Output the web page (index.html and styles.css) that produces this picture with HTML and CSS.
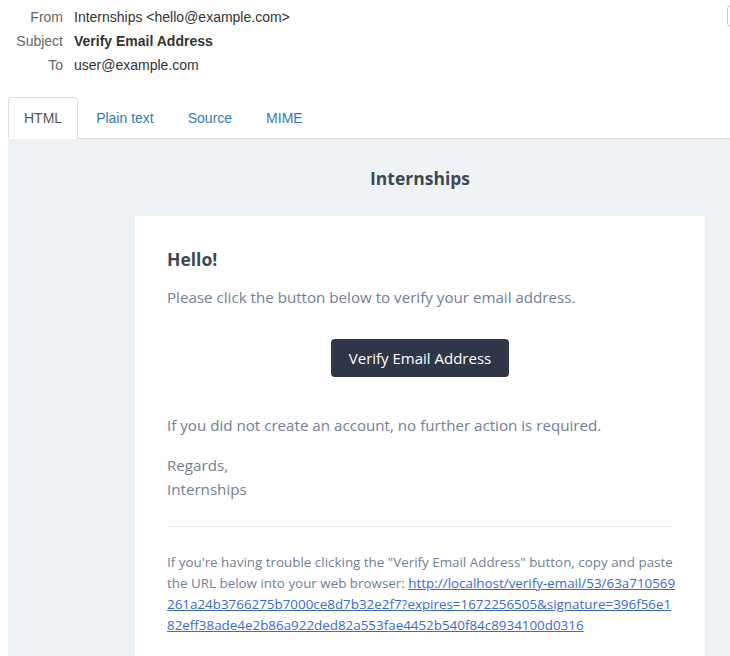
FILE: index.html
```html
<!DOCTYPE html>
<html>
<head>
<meta charset="utf-8">
<link rel="stylesheet" href="styles.css">
</head>
<body>
<div class="page">
  <div class="meta">
    <div class="fields">
      <div class="label">From</div><div class="value">Internships &lt;hello@example.com&gt;</div>
      <div class="label">Subject</div><div class="value strong">Verify Email Address</div>
      <div class="label">To</div><div class="value">user@example.com</div>
    </div>
    <div class="dl"></div>
  </div>
  <ul class="tabs">
    <li class="tab active">HTML</li>
    <li class="tab">Plain text</li>
    <li class="tab">Source</li>
    <li class="tab">MIME</li>
  </ul>
  <div class="mail">
    <div class="brand">Internships</div>
    <div class="card">
      <h1 class="hello">Hello!</h1>
      <p class="para">Please click the button below to verify your email address.</p>
      <div class="action"><span class="btn">Verify Email Address</span></div>
      <p class="para">If you did not create an account, no further action is required.</p>
      <p class="para">Regards,<br>Internships</p>
      <div class="subcopy">
        <p class="small">If you're having trouble clicking the "Verify Email Address" button, copy and paste<br>the URL below into your web browser: <a class="link" href="#">http://localhost/verify-email/53/63a710569<br>261a24b3766275b7000ce8d7b32e2f7?expires=1672256505&amp;signature=396f56e1<br>82eff38ade4e2b86a922ded82a553fae4452b540f84c8934100d0316</a></p>
      </div>
    </div>
  </div>
</div>
</body>
</html>
```
FILE: styles.css
```css
html, body { overflow: hidden; }
body {
  margin: 0;
  padding: 0 8px;
  font-family: "Liberation Sans", Arial, sans-serif;
  font-size: 14px;
  color: #333;
  background: #fff;
}
.page { width: 824px; }
.meta {
  display: flex;
  justify-content: space-between;
  align-items: flex-start;
  padding-top: 5px;
}
.fields {
  display: grid;
  grid-template-columns: 55px auto;
  column-gap: 11px;
  line-height: 24px;
}
.label { text-align: right; color: #666; }
.value { color: #333; }
.strong { font-weight: bold; }
.dl {
  box-sizing: border-box;
  width: 105px;
  height: 22px;
  border: 1px solid #ccc;
  border-radius: 4px;
  background: #fff;
}
.tabs {
  list-style: none;
  margin: 20px 0 0;
  padding: 0;
  display: flex;
  border-bottom: 1px solid #ddd;
}
.tab {
  padding: 10px 15px;
  line-height: 20px;
  margin-right: 2px;
  margin-bottom: -1px;
  border: 1px solid transparent;
  border-radius: 4px 4px 0 0;
  color: #337ab7;
}
.tab.active {
  color: #555;
  background: #fff;
  border-color: #ddd #ddd transparent;
}
.mail {
  background: #edf2f7;
  font-family: "Open Sans", "Noto Sans", sans-serif;
  padding-bottom: 40px;
}
.brand {
  text-align: center;
  padding: 26px 0 24px;
  font-size: 17.5px;
  line-height: 27px;
  font-weight: bold;
  color: #3d4852;
}
.card {
  width: 570px;
  margin: 0 auto;
  box-sizing: border-box;
  padding: 30px 32px 32px;
  background: #fff;
  border-radius: 2px;
  box-shadow: 0 2px 0 rgba(0,0,150,.025), 2px 4px 0 rgba(0,0,150,.015);
}
.hello {
  margin: 0 0 12px;
  font-size: 17.5px;
  line-height: 27px;
  font-weight: bold;
  color: #3d4852;
}
.para {
  margin: 0 0 16px;
  font-size: 15.15px;
  line-height: 24px;
  color: #718096;
}
.action {
  margin: 30px 0 36px;
  text-align: center;
}
.btn {
  display: inline-block;
  background: #2d3748;
  color: #fff;
  border-radius: 4px;
  padding: 8px 18px;
  font-size: 15px;
  line-height: 22px;
}
.subcopy {
  margin-top: 25px;
  padding-top: 25px;
  border-top: 1px solid #e8e5ef;
}
.small {
  margin: 0;
  font-size: 13.4px;
  line-height: 21px;
  color: #718096;
  white-space: nowrap;
}
.link { color: #3869d4; }
```
